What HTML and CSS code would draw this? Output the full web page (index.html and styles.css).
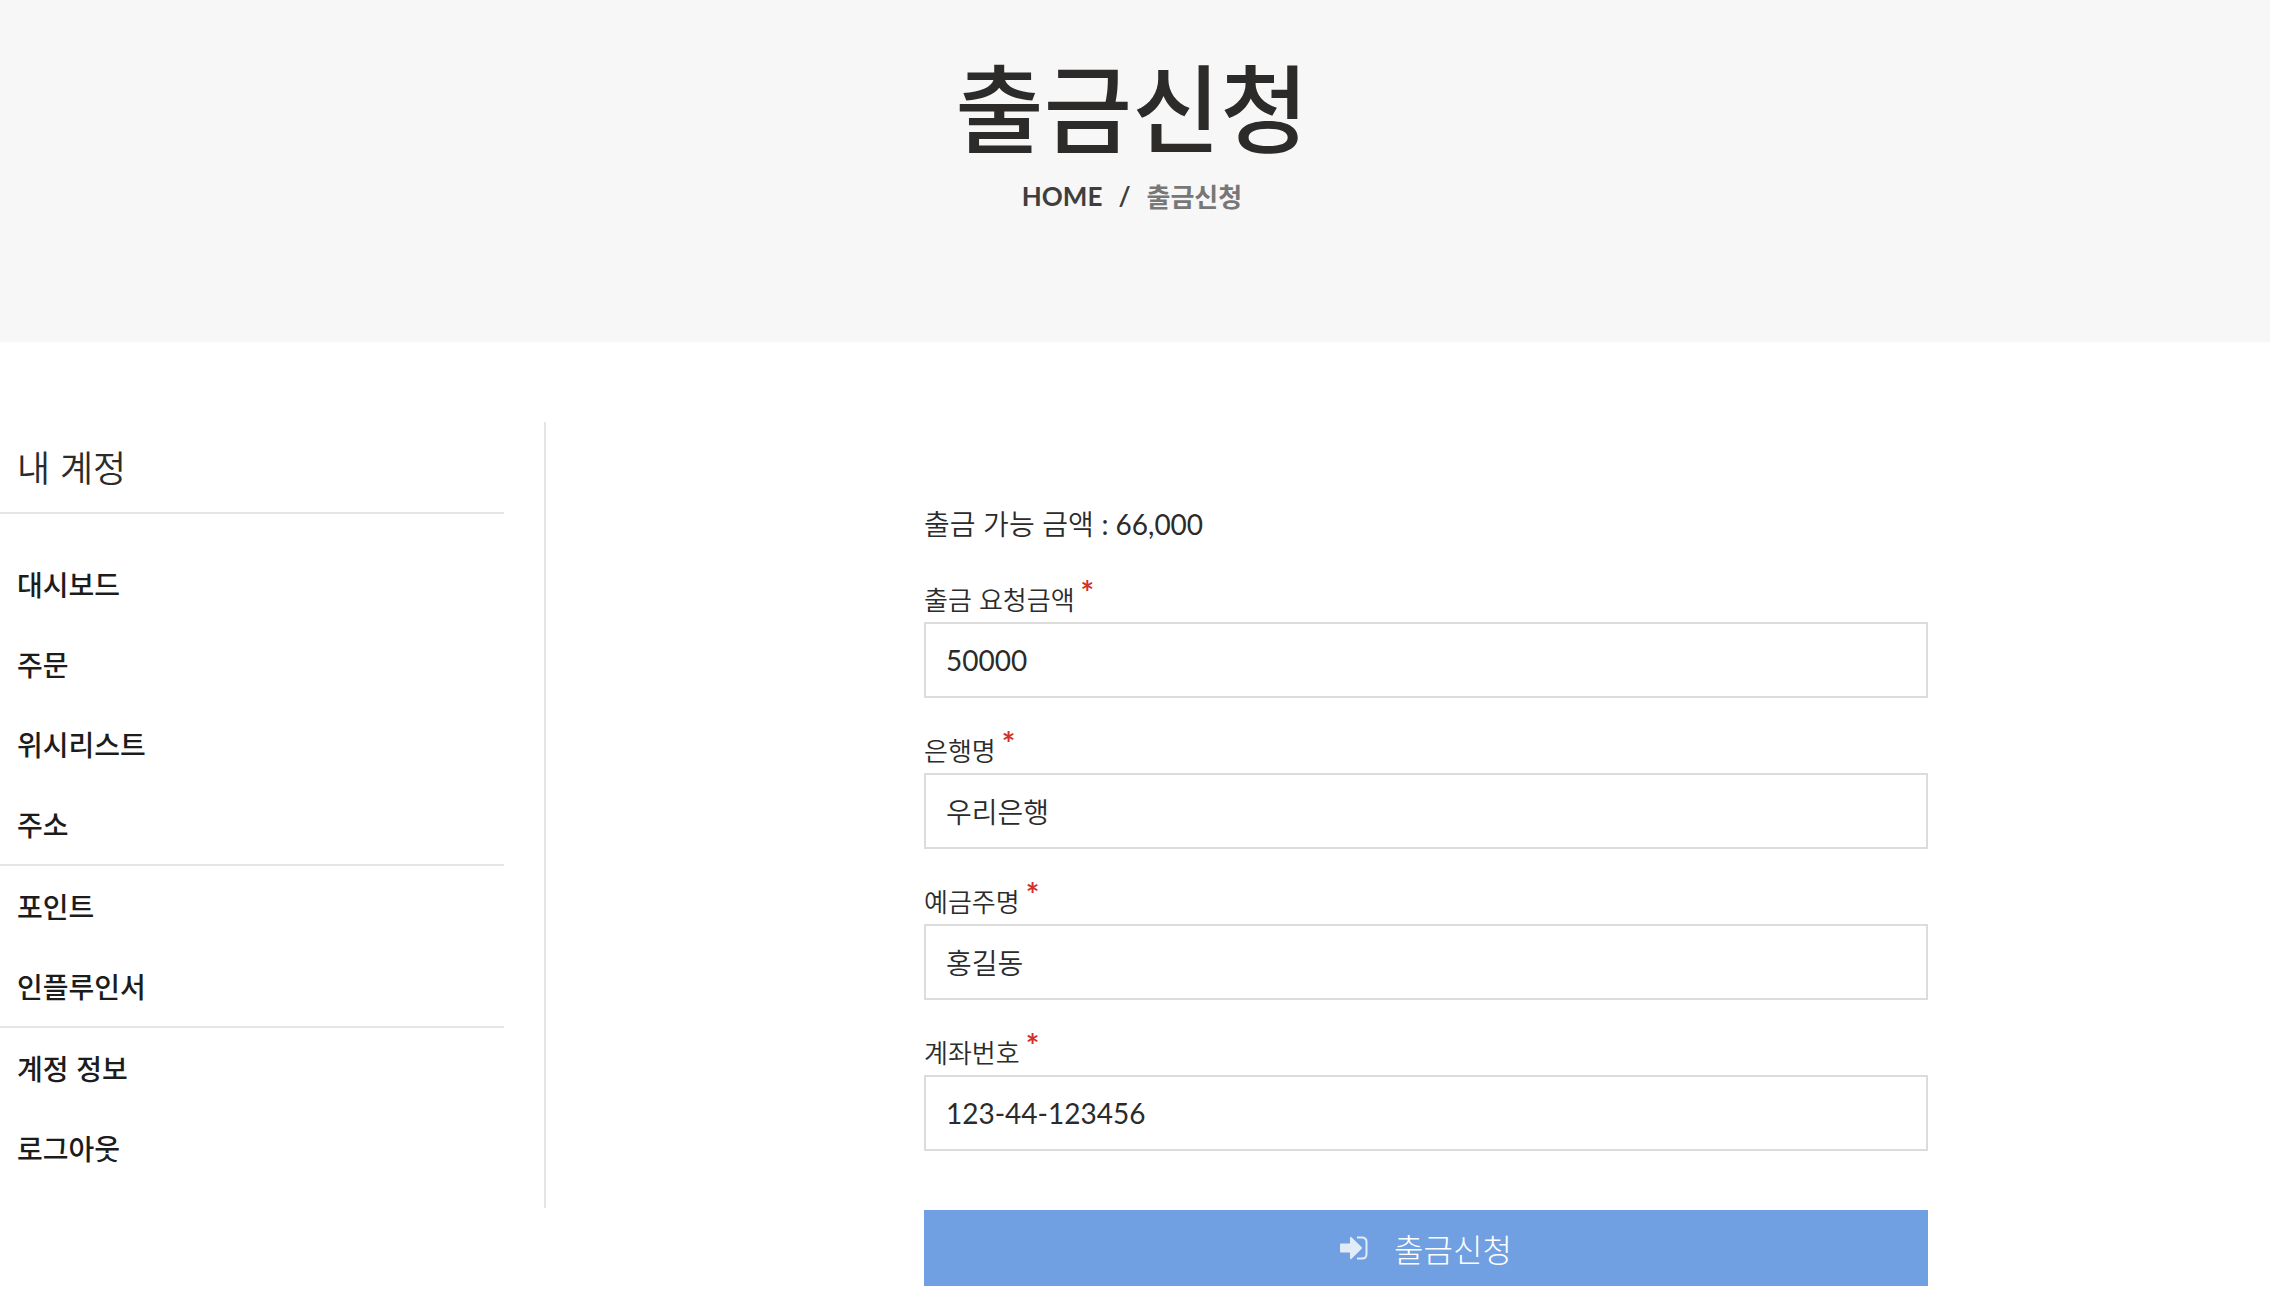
FILE: index.html
```html
<!DOCTYPE html>
<html lang="ko">
<head>
<meta charset="utf-8">
<meta name="viewport" content="width=device-width, initial-scale=1">
<title>출금신청</title>
<link rel="stylesheet" href="styles.css">
</head>
<body>
<header class="page-title">
  <h1 class="page-title__heading">출금신청</h1>
  <nav class="breadcrumb" aria-label="breadcrumb">
    <a class="breadcrumb__link" href="#">HOME</a>
    <span class="breadcrumb__link">/</span>
    <span class="breadcrumb__current">출금신청</span>
  </nav>
</header>
<div class="layout">
  <aside class="sidebar">
    <h2 class="sidebar__title">내 계정</h2>
    <nav>
      <ul class="menu">
        <li><a class="menu__link" href="#">대시보드</a></li>
        <li><a class="menu__link" href="#">주문</a></li>
        <li><a class="menu__link" href="#">위시리스트</a></li>
        <li class="menu__item--divided"><a class="menu__link" href="#">주소</a></li>
        <li><a class="menu__link" href="#">포인트</a></li>
        <li class="menu__item--divided"><a class="menu__link" href="#">인플루인서</a></li>
        <li><a class="menu__link" href="#">계정 정보</a></li>
        <li><a class="menu__link" href="#">로그아웃</a></li>
      </ul>
    </nav>
  </aside>
  <main class="content">
    <p class="balance">출금 가능 금액 <span class="balance__amount">: 66,000</span></p>
    <form class="form">
      <div class="field">
        <label class="field__label" for="amount">출금 요청금액<span class="field__required">*</span></label>
        <input class="field__input" id="amount" type="text" value="50000">
      </div>
      <div class="field">
        <label class="field__label" for="bank">은행명<span class="field__required">*</span></label>
        <input class="field__input field__input--korean" id="bank" type="text" value="우리은행">
      </div>
      <div class="field">
        <label class="field__label" for="holder">예금주명<span class="field__required">*</span></label>
        <input class="field__input field__input--korean" id="holder" type="text" value="홍길동">
      </div>
      <div class="field">
        <label class="field__label" for="account">계좌번호<span class="field__required">*</span></label>
        <input class="field__input" id="account" type="text" value="123-44-123456">
      </div>
      <button class="submit" type="button">
        <svg class="submit__icon" viewBox="0 0 28 24" aria-hidden="true">
          <path d="M1 7.500h9V2q0-2 1.500-.7L21.500 11q1 1 0 2L11.500 22.700Q10 24 10 22v-5.500H1q-1 0-1-1v-7q0-1 1-1z" fill="currentColor"/>
          <path d="M17 1.500h5q4.500 0 4.500 4.500v12q0 4.500-4.500 4.500h-5" fill="none" stroke="currentColor" stroke-width="2"/>
        </svg>
        <span>출금신청</span>
      </button>
    </form>
  </main>
</div>
</body>
</html>
```
FILE: styles.css
```css
* {
  box-sizing: border-box;
}

body {
  margin: 0;
  background: #fff;
  color: #2b2b2b;
  font-family: Lato, "Noto Sans CJK KR", sans-serif;
  font-size: 28px;
}

.page-title {
  padding: 48px 36px 122px 30px;
  background: #f7f7f7;
  text-align: center;
}

.page-title__heading {
  margin: 0 0 4px;
  color: #2d2a2a;
  font-size: 96px;
  font-weight: 500;
  line-height: 120px;
}

.breadcrumb {
  display: flex;
  justify-content: center;
  gap: 16px;
  font-size: 26px;
  line-height: 48px;
}

.breadcrumb__link {
  color: #3e3e3e;
  font-weight: 700;
  text-decoration: none;
}

.breadcrumb__current {
  color: #777;
  font-family: "Noto Sans CJK KR", sans-serif;
  font-weight: 700;
}

.layout {
  display: flex;
  align-items: flex-start;
  padding-top: 80px;
}

.sidebar {
  flex: 0 0 546px;
  padding: 5px 40px 20px 0;
  border-right: 2px solid #e5e5e5;
}

.sidebar__title {
  margin: 0 0 30px;
  padding: 11px 17px 14px;
  border-bottom: 2px solid #e5e5e5;
  font-size: 36px;
  font-weight: 350;
  line-height: 60px;
}

.menu {
  margin: 0;
  padding: 0;
  font-family: "Noto Sans CJK KR", sans-serif;
  list-style: none;
}

.menu__item--divided {
  border-bottom: 2px solid #e5e5e5;
}

.menu__link {
  display: block;
  padding: 0 17px;
  color: #1c1c1c;
  font-weight: 500;
  line-height: 80px;
  text-decoration: none;
}

.content {
  flex: 1;
  padding: 80px 342px 24px 378px;
}

.balance {
  margin: 0 0 30px;
  font-weight: 350;
  line-height: 45px;
}

.balance__amount {
  font-weight: 400;
}

.form {
  display: flex;
  flex-direction: column;
  gap: 30px;
}

.field {
  display: flex;
  flex-direction: column;
}

.field__label {
  height: 45px;
  font-size: 26px;
  font-weight: 350;
  line-height: 45px;
}

.field__required {
  margin-left: 6px;
  color: #d0312d;
  font-size: 32px;
  font-weight: 700;
  line-height: 1;
  vertical-align: 5px;
}

.field__input {
  width: 100%;
  height: 76px;
  padding: 0 20px;
  border: 2px solid #dcdcdc;
  border-radius: 0;
  background: #fff;
  color: #2b2b2b;
  font-family: inherit;
  font-size: 28px;
}

.field__input--korean {
  font-weight: 350;
}

.submit {
  display: flex;
  align-items: center;
  justify-content: center;
  gap: 26px;
  height: 76px;
  margin-top: 29px;
  border: 0;
  background: #71a0e2;
  color: #fff;
  font-family: inherit;
  font-size: 32px;
  font-weight: 300;
}

.submit__icon {
  width: 28px;
  height: 24px;
  opacity: .8;
}
```
